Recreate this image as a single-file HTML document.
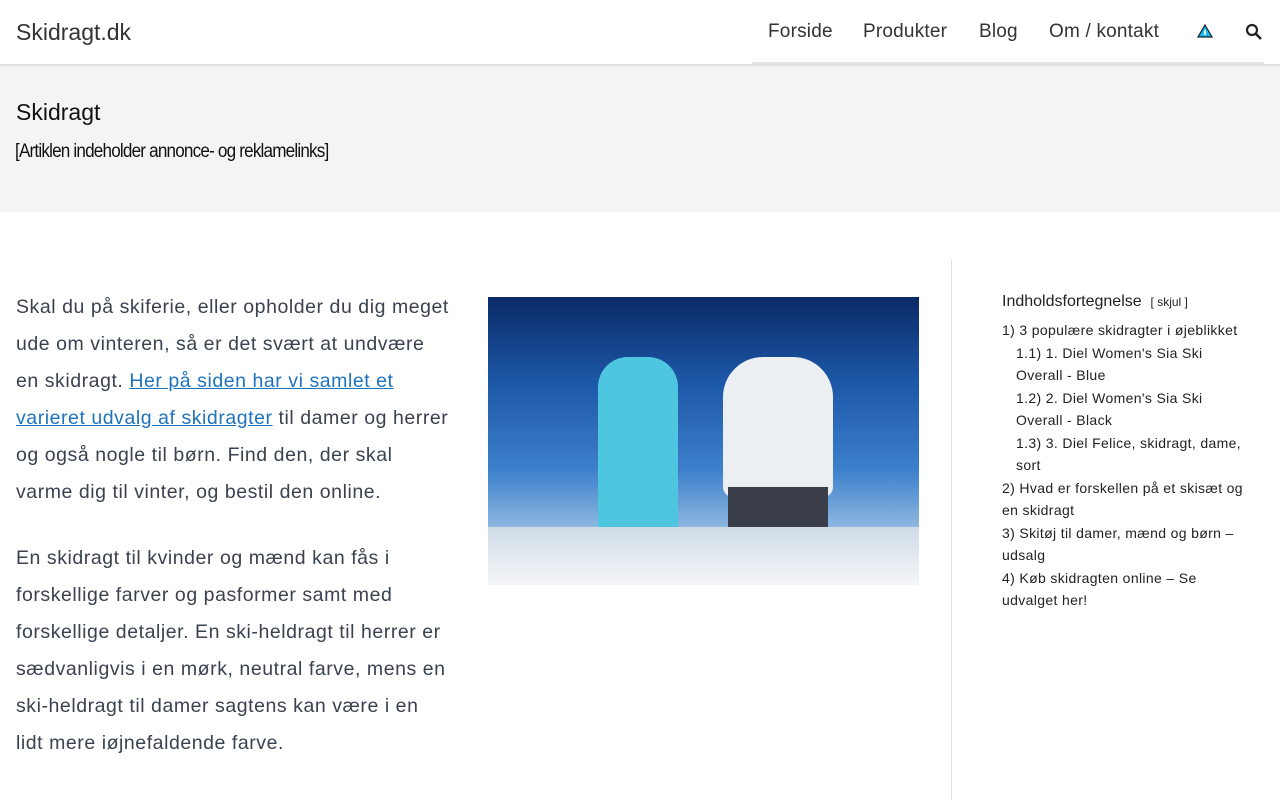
<!DOCTYPE html>
<html><head><meta charset="utf-8"><style>
*{margin:0;padding:0;box-sizing:border-box}
body{width:1280px;height:800px;overflow:hidden;background:#fff;font-family:"Liberation Sans",sans-serif;color:#3a4250}
.hdr{height:64px;background:#fff;position:relative;box-shadow:0 1px 3px rgba(0,0,0,.15);z-index:2}
.logo{position:absolute;left:16px;top:19px;font-size:23px;color:#333;letter-spacing:0}
.nav{position:absolute;top:21px;font-size:19px;color:#333;letter-spacing:0.2px}
.navline{position:absolute;left:752px;right:16px;top:62px;height:2px;background:#e6e6e6}
.band{background:#f4f4f4;height:148px;position:relative}
.band h1{position:absolute;left:16px;top:35px;font-size:23px;font-weight:normal;color:#111;letter-spacing:0}
.band p{position:absolute;left:15px;top:77px;font-size:19px;color:#111;letter-spacing:-0.9px;transform:scaleX(0.9);transform-origin:0 0;white-space:nowrap}
.main{position:absolute;left:16px;top:289px;width:460px;font-size:19.5px;line-height:37px;color:#3a4250;letter-spacing:0.55px;white-space:nowrap}
.main a{color:#1e73be}
.img{position:absolute;left:488px;top:297px;width:431px;height:288px;background:linear-gradient(180deg,#0a2a66 0%,#1d58a8 30%,#3c80cc 60%,#8db8e0 80%,#e8eef4 92%,#fff 100%);overflow:hidden}
.vline{position:absolute;left:951px;top:260px;width:1px;height:540px;background:#e0e0e0}
.toc{position:absolute;left:1002px;top:291px;width:245px;font-size:14px;line-height:22px;color:#222;letter-spacing:0.35px}
.toc .t{font-size:16px;margin-bottom:6px;letter-spacing:0}
.toc .t span{font-size:12px}
.toc div{margin-bottom:1px}
.toc .s{padding-left:14px}
</style></head><body>
<div class="hdr">
<div class="logo">Skidragt.dk</div>
<div class="nav" style="left:768px">Forside</div>
<div class="nav" style="left:863px">Produkter</div>
<div class="nav" style="left:979px">Blog</div>
<div class="nav" style="left:1049px">Om / kontakt</div>
<svg style="position:absolute;left:1197px;top:24px" width="16" height="14" viewBox="0 0 16 14"><path d="M8 1L15 13H1Z" fill="#19b8e8" stroke="#123" stroke-width="1.2"/><rect x="7.2" y="6" width="1.6" height="5" fill="#fff"/></svg>
<svg style="position:absolute;left:1245px;top:23px" width="18" height="18" viewBox="0 0 18 18"><circle cx="7" cy="7" r="5" fill="none" stroke="#222" stroke-width="2.2"/><path d="M10.5 10.5L16 16" stroke="#222" stroke-width="2.6"/></svg>
<div class="navline"></div>
</div>
<div class="band"><h1>Skidragt</h1><p>[Artiklen indeholder annonce- og reklamelinks]</p></div>
<div class="main">
<p style="margin-bottom:29px">Skal du på skiferie, eller opholder du dig meget<br>ude om vinteren, så er det svært at undvære<br>en skidragt. <a href="#">Her på siden har vi samlet et<br>varieret udvalg af skidragter</a> til damer og herrer<br>og også nogle til børn. Find den, der skal<br>varme dig til vinter, og bestil den online.</p>
<p>En skidragt til kvinder og mænd kan fås i<br>forskellige farver og pasformer samt med<br>forskellige detaljer. En ski-heldragt til herrer er<br>sædvanligvis i en mørk, neutral farve, mens en<br>ski-heldragt til damer sagtens kan være i en<br>lidt mere iøjnefaldende farve.</p>
</div>
<div class="img">
<div style="position:absolute;left:110px;top:60px;width:80px;height:230px;background:#4ec6e0;border-radius:30px 30px 0 0"></div>
<div style="position:absolute;left:235px;top:60px;width:110px;height:140px;background:#eceff2;border-radius:40px 40px 10px 10px"></div>
<div style="position:absolute;left:240px;top:190px;width:100px;height:100px;background:#3a3e48"></div>
<div style="position:absolute;left:0;top:230px;width:431px;height:58px;background:linear-gradient(180deg,#cfdbe6,#f4f6f8)"></div>
</div>
<div class="vline"></div>
<div class="toc">
<div class="t">Indholdsfortegnelse &nbsp;<span>[ skjul ]</span></div>
<div>1) 3 populære skidragter i øjeblikket</div>
<div class="s">1.1) 1. Diel Women's Sia Ski<br>Overall - Blue</div>
<div class="s">1.2) 2. Diel Women's Sia Ski<br>Overall - Black</div>
<div class="s">1.3) 3. Diel Felice, skidragt, dame,<br>sort</div>
<div>2) Hvad er forskellen på et skisæt og<br>en skidragt</div>
<div>3) Skitøj til damer, mænd og børn –<br>udsalg</div>
<div>4) Køb skidragten online – Se<br>udvalget her!</div>
</div>
</body></html>
